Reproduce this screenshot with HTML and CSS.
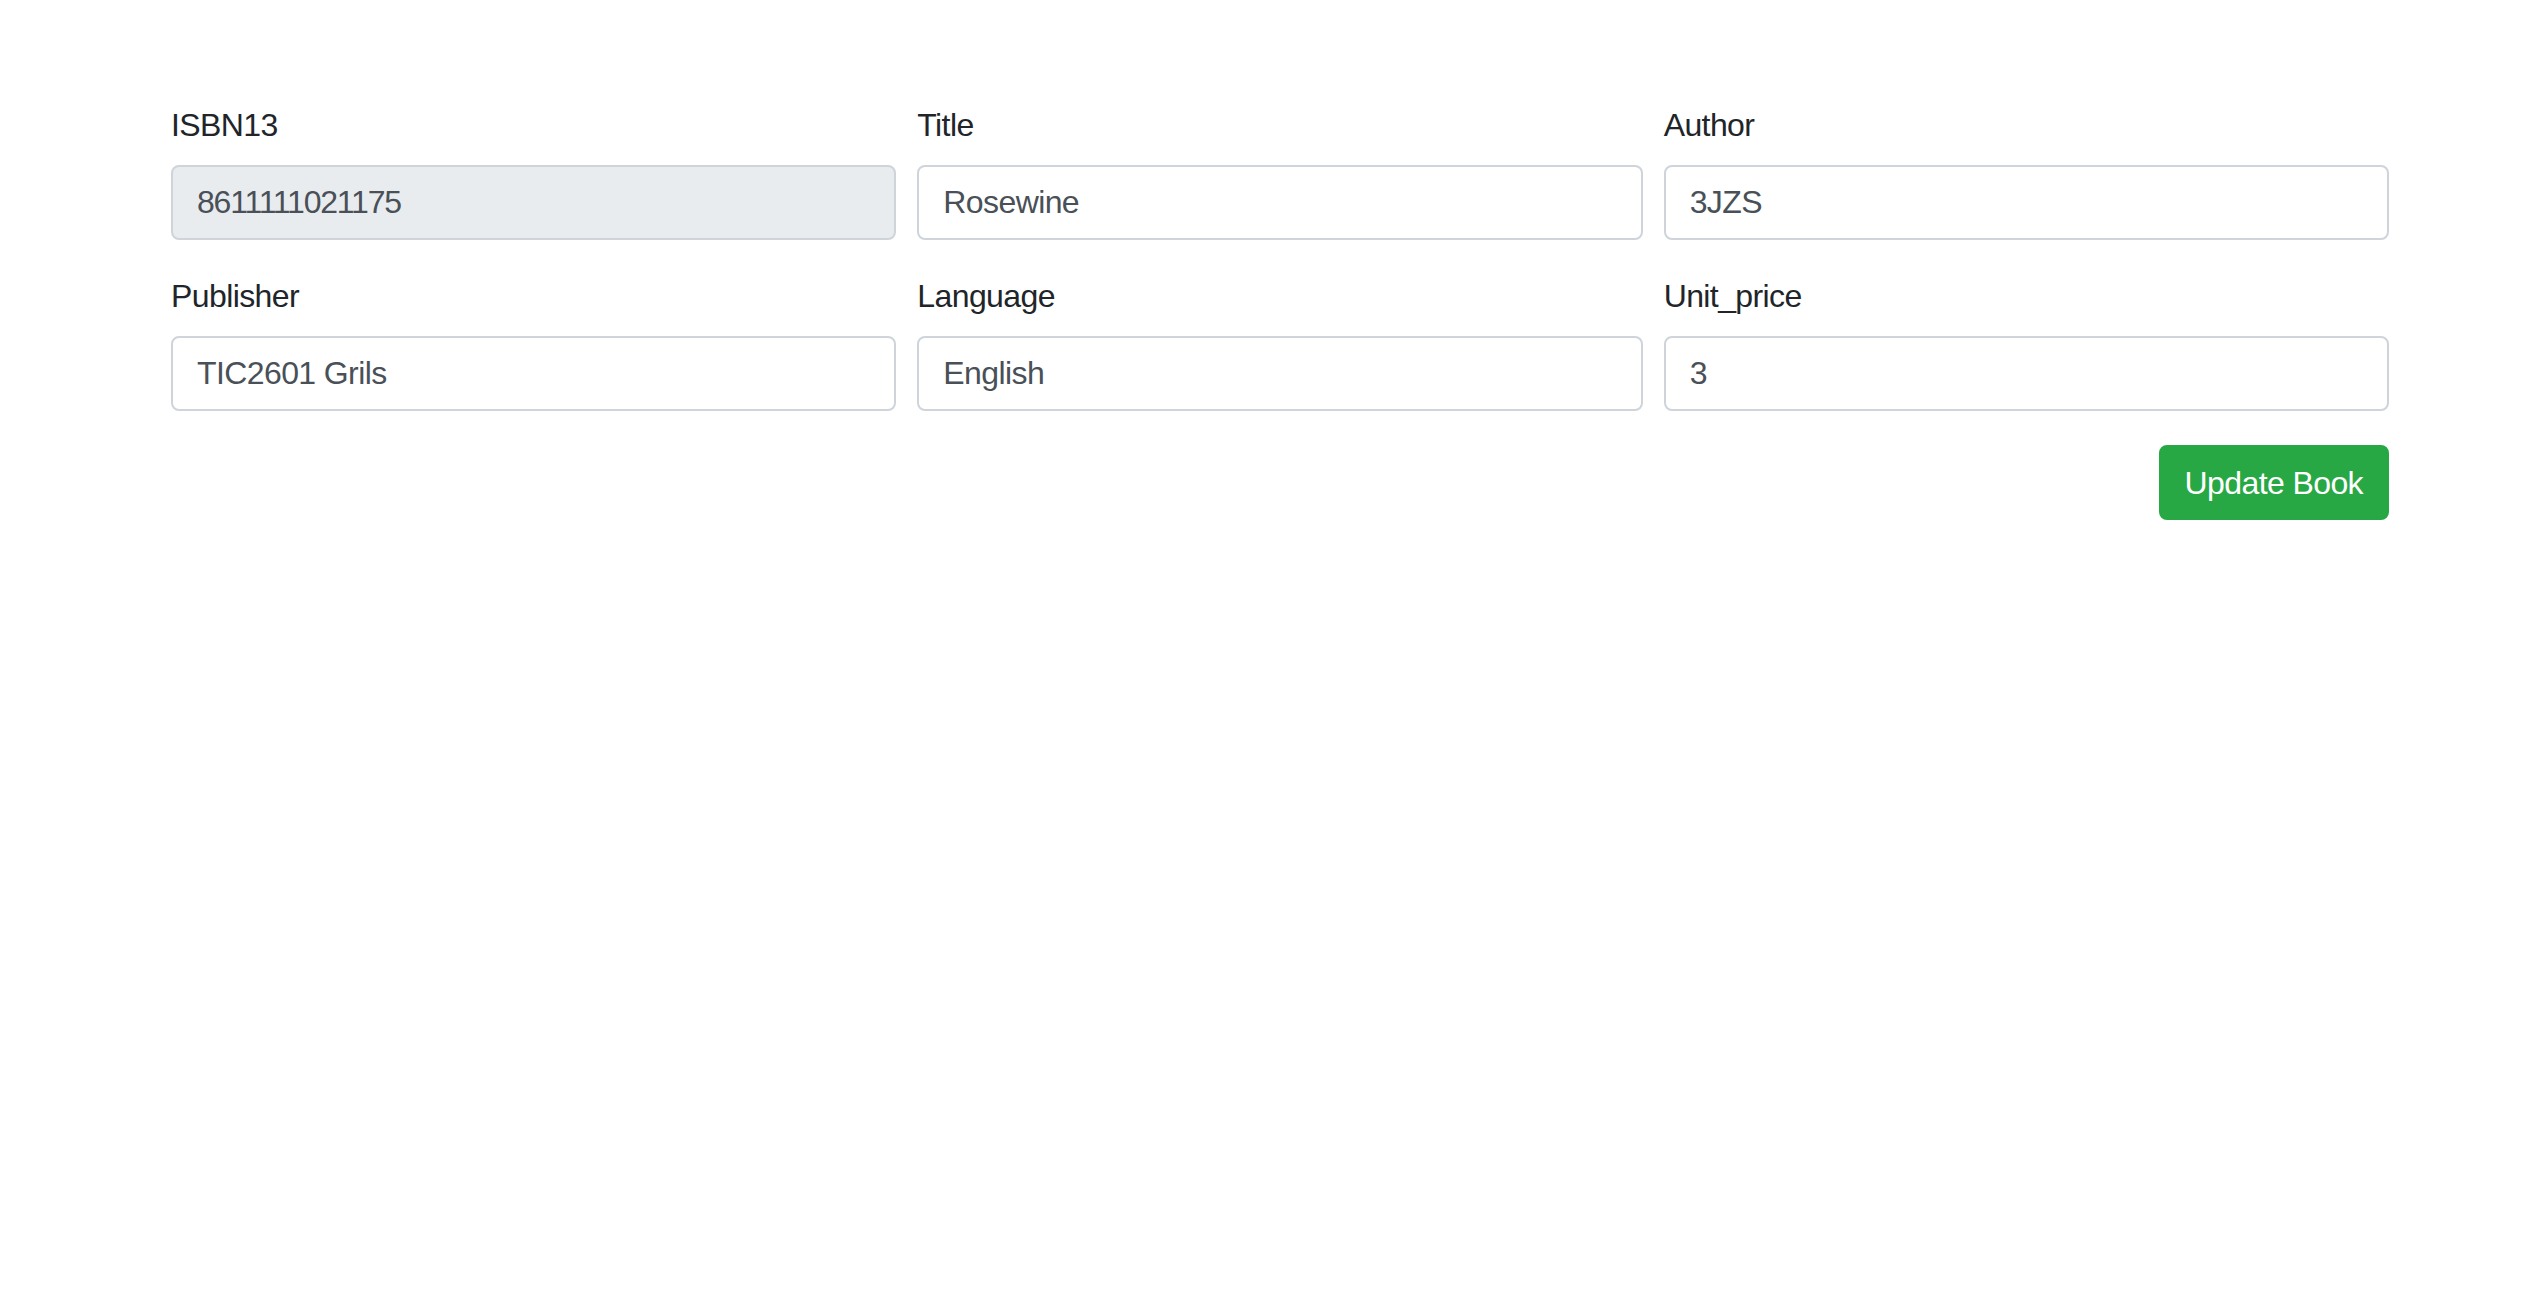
FILE: index.html
```html
<!DOCTYPE html>
<html lang="en">
<head>
<meta charset="utf-8">
<title>Update Book</title>
<link rel="stylesheet" href="styles.css">
</head>
<body>
<div class="page">
  <form class="book-form">
    <div class="grid">
      <div class="group">
        <label class="label" for="isbn">ISBN13</label>
        <input class="field field-disabled" id="isbn" type="text" value="8611111021175" disabled>
      </div>
      <div class="group">
        <label class="label" for="title">Title</label>
        <input class="field" id="title" type="text" value="Rosewine">
      </div>
      <div class="group">
        <label class="label" for="author">Author</label>
        <input class="field" id="author" type="text" value="3JZS">
      </div>
      <div class="group">
        <label class="label" for="publisher">Publisher</label>
        <input class="field" id="publisher" type="text" value="TIC2601 Grils">
      </div>
      <div class="group">
        <label class="label" for="language">Language</label>
        <input class="field" id="language" type="text" value="English">
      </div>
      <div class="group">
        <label class="label" for="price">Unit_price</label>
        <input class="field" id="price" type="text" value="3">
      </div>
    </div>
    <div class="actions">
      <button class="btn-success" type="button">Update Book</button>
    </div>
  </form>
</div>
</body>
</html>
```

FILE: styles.css
```css
html, body {
  margin: 0;
  padding: 0;
  background: #ffffff;
}

body {
  font-family: "Liberation Sans", Arial, sans-serif;
  color: #212529;
  letter-spacing: -0.6px;
}

.page {
  padding: 101px 0 0 171px;
}

.book-form {
  width: 2218px;
}

.grid {
  display: grid;
  grid-template-columns: repeat(3, 1fr);
  column-gap: 21px;
}

.group {
  display: flex;
  flex-direction: column;
  margin-bottom: 32px;
}

.label {
  display: block;
  font-size: 32px;
  line-height: 48px;
  margin-bottom: 16px;
  color: #212529;
}

.field {
  box-sizing: border-box;
  display: block;
  width: 100%;
  height: 75px;
  padding: 12px 24px;
  font-family: inherit;
  font-size: 32px;
  line-height: 48px;
  letter-spacing: -0.6px;
  color: #495057;
  background: #ffffff;
  border: 2px solid #ced4da;
  border-radius: 8px;
  outline: none;
}

.field-disabled {
  background: #e9ecef;
  color: #495057;
  -webkit-text-fill-color: #495057;
  opacity: 1;
  letter-spacing: -1.2px;
}

.actions {
  display: flex;
  justify-content: flex-end;
  margin-top: 2px;
}

.btn-success {
  box-sizing: border-box;
  height: 75px;
  padding: 12px 24px;
  font-family: inherit;
  font-size: 32px;
  line-height: 48px;
  letter-spacing: -0.6px;
  color: #ffffff;
  background: #28a745;
  border: 2px solid #28a745;
  border-radius: 8px;
  cursor: pointer;
}
```
